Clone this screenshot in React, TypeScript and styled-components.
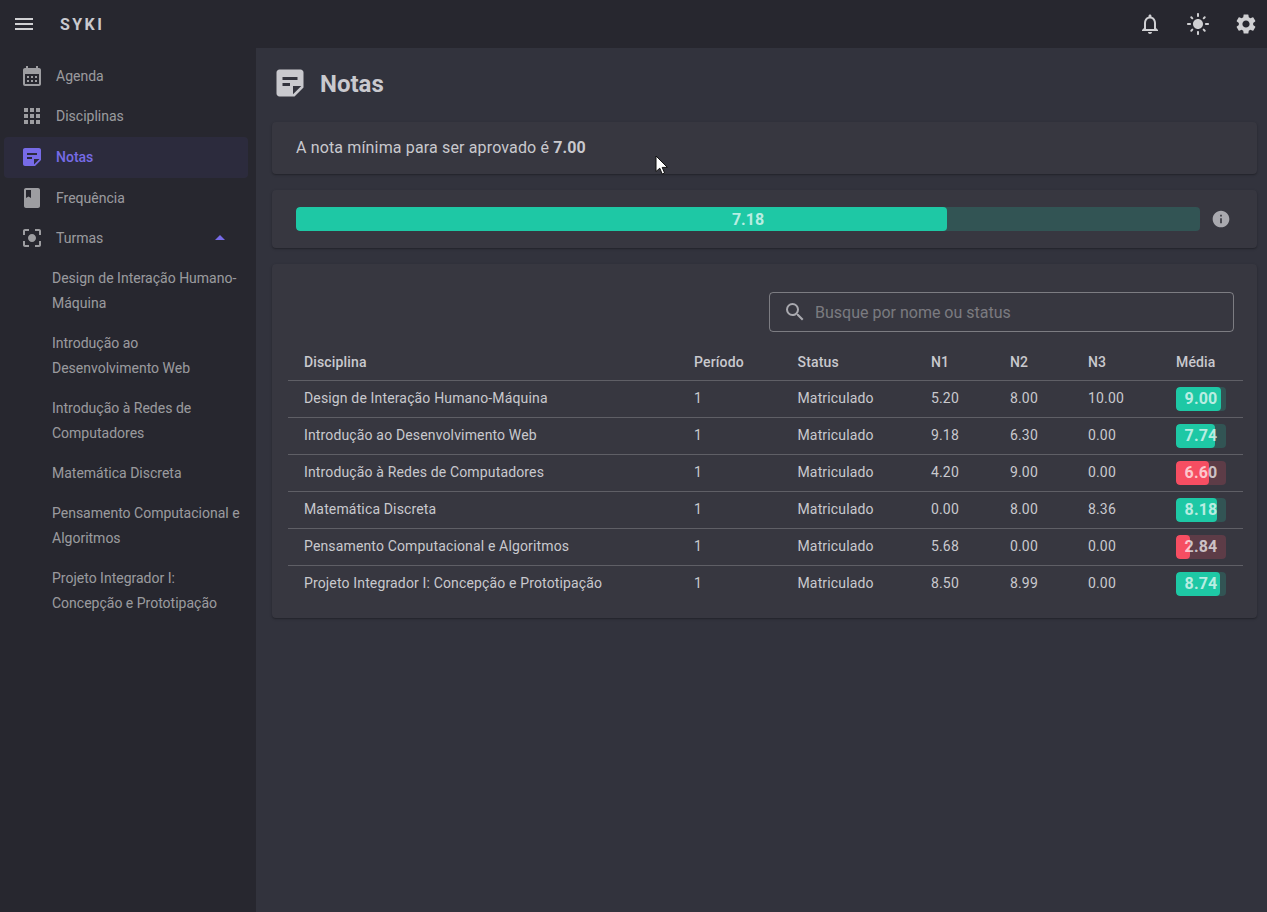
import * as React from "react";
import styled, { createGlobalStyle } from "styled-components";
import {
  MdApps,
  MdArrowDropUp,
  MdCalendarMonth,
  MdCenterFocusStrong,
  MdClass,
  MdInfo,
  MdLightMode,
  MdMenu,
  MdNotificationsNone,
  MdSearch,
  MdSettings,
  MdStickyNote2
} from "react-icons/md";

const colors = {
  bar: "#27272f",
  page: "#32333d",
  surface: "#373740",
  primary: "#776be7",
  success: "#1ec8a5",
  error: "#f64e62",
  text: "rgba(255,255,255,0.7)",
  textStrong: "#c9c9ce",
  line: "rgba(255,255,255,0.2)"
};

const GlobalStyle = createGlobalStyle`
  html, body {
    margin: 0;
    padding: 0;
    height: 100%;
    background: ${colors.page};
    font-family: Roboto, "Liberation Sans", sans-serif;
    color: ${colors.text};
    overflow: hidden;
  }
  * { box-sizing: border-box; }
`;

const Shell = styled.div`
  width: 1267px;
  height: 912px;
  display: flex;
  flex-direction: column;
  position: relative;
  overflow: hidden;
`;

const AppBar = styled.header`
  height: 48px;
  flex: none;
  display: flex;
  align-items: center;
  background: ${colors.bar};
  padding: 0 9px 0 12px;
  color: #d0d0d3;
`;

const Brand = styled.div`
  margin-left: 24px;
  font-size: 16px;
  font-weight: 700;
  letter-spacing: 2.4px;
  color: #c9c9ce;
  flex: 1;
`;

const BarIcons = styled.div`
  display: flex;
  gap: 24px;
  align-items: center;
`;

const Body = styled.div`
  flex: 1;
  display: flex;
  min-height: 0;
`;

const Drawer = styled.nav`
  width: 256px;
  flex: none;
  background: ${colors.bar};
  padding: 7.3px 8px 0 4px;
`;

const NavRow = styled.div<{ $active?: boolean }>`
  height: 41px;
  margin-bottom: -0.4px;
  display: flex;
  align-items: center;
  padding-left: 16px;
  gap: 12px;
  border-radius: 4px;
  font-size: 14px;
  color: ${p => (p.$active ? colors.primary : "rgba(255,255,255,0.55)")};
  font-weight: ${p => (p.$active ? 500 : 400)};
  background: ${p => (p.$active ? "rgba(119,107,231,0.08)" : "transparent")};
  svg { flex: none; }
`;

const NavCaret = styled.span`
  margin-left: auto;
  margin-right: 16px;
  display: flex;
  color: ${colors.primary};
`;

const SubList = styled.div`
  padding: 0 0 0 48px;
`;

const SubItem = styled.div`
  font-size: 14px;
  line-height: 24.5px;
  padding: 8px 0;
  margin-bottom: -0.1px;
  color: rgba(255, 255, 255, 0.55);
`;

const Main = styled.main`
  flex: 1;
  padding: 16px 10px 0 16px;
  display: flex;
  flex-direction: column;
`;

const TitleRow = styled.div`
  height: 38px;
  display: flex;
  align-items: center;
  gap: 12px;
  margin-bottom: 20px;
  color: #c9c9ce;
`;

const Title = styled.h1`
  margin: 0;
  padding-top: 2px;
  font-size: 24px;
  font-weight: 700;
  color: ${colors.textStrong};
`;

const Card = styled.section`
  background: ${colors.surface};
  border-radius: 4px;
  box-shadow: 0 1px 3px rgba(0, 0, 0, 0.2), 0 1px 1px rgba(0, 0, 0, 0.14);
  margin-bottom: 16px;
`;

const NoticeCard = styled(Card)`
  height: 52px;
  padding: 0 24px 2px;
  display: flex;
  align-items: center;
  font-size: 16px;
  letter-spacing: 0.15px;
  color: ${colors.textStrong};
  b { font-weight: 700; margin-left: 4px; }
`;

const ProgressCard = styled(Card)`
  height: 58px;
  padding: 0 26px 0 24px;
  display: flex;
  align-items: center;
  gap: 11px;
  color: #a9a9af;
`;

const Track = styled.div<{ $tone: string; $w?: number }>`
  position: relative;
  flex: ${p => (p.$w ? "none" : "1")};
  width: ${p => (p.$w ? `${p.$w}px` : "auto")};
  height: 24px;
  border-radius: 4px;
  overflow: hidden;
  background: ${p => p.$tone}33;
`;

const Fill = styled.div<{ $tone: string }>`
  height: 100%;
  border-radius: 4px;
  background: ${p => p.$tone};
`;

const TrackLabel = styled.span`
  position: absolute;
  inset: 0;
  display: flex;
  align-items: center;
  justify-content: center;
  font-size: 16px;
  font-weight: 700;
  color: rgba(255, 255, 255, 0.7);
`;

const TableCard = styled(Card)`
  height: 354px;
  padding: 28px 14px 0 16px;
`;

const SearchBox = styled.div`
  width: 465px;
  height: 40px;
  margin-left: auto;
  margin-right: 9px;
  border: 1px solid rgba(255, 255, 255, 0.35);
  border-radius: 4px;
  display: flex;
  align-items: center;
  padding-left: 13px;
  gap: 8px;
  font-size: 16px;
  color: rgba(255, 255, 255, 0.35);
  svg { color: #a9a9af; flex: none; }
`;

const Table = styled.table`
  width: 955px;
  margin-top: 12px;
  border-collapse: collapse;
  table-layout: fixed;
  font-size: 14px;
  letter-spacing: 0.15px;
`;

const Th = styled.th<{ $w: number }>`
  width: ${p => p.$w}px;
  height: 36px;
  padding: 0 0 0 16px;
  text-align: left;
  font-weight: 500;
  color: ${colors.textStrong};
  border-bottom: 1px solid ${colors.line};
`;

const Td = styled.td<{ $last?: boolean; $bar?: boolean }>`
  height: 37px;
  padding: 0 0 ${p => (p.$bar ? 0 : 2)}px 16px;
  color: ${colors.textStrong};
  border-bottom: ${p => (p.$last ? "none" : `1px solid ${colors.line}`)};
`;

const Cursor = styled.svg`
  position: absolute;
  left: 655px;
  top: 155px;
`;

const columns: [string, number][] = [
  ["Disciplina", 390],
  ["Período", 103.5],
  ["Status", 133.5],
  ["N1", 79],
  ["N2", 78],
  ["N3", 88],
  ["Média", 83]
];

const rows: [string, string, string, string, number][] = [
  ["Design de Interação Humano-Máquina", "5.20", "8.00", "10.00", 9.0],
  ["Introdução ao Desenvolvimento Web", "9.18", "6.30", "0.00", 7.74],
  ["Introdução à Redes de Computadores", "4.20", "9.00", "0.00", 6.6],
  ["Matemática Discreta", "0.00", "8.00", "8.36", 8.18],
  ["Pensamento Computacional e Algoritmos", "5.68", "0.00", "0.00", 2.84],
  ["Projeto Integrador I: Concepção e Prototipação", "8.50", "8.99", "0.00", 8.74]
];

const turmas = [
  ["Design de Interação Humano-", "Máquina"],
  ["Introdução ao", "Desenvolvimento Web"],
  ["Introdução à Redes de", "Computadores"],
  ["Matemática Discreta"],
  ["Pensamento Computacional e", "Algoritmos"],
  ["Projeto Integrador I:", "Concepção e Prototipação"]
];

const App = () => (
  <Shell>
    <GlobalStyle />
    <AppBar>
      <MdMenu size={24} />
      <Brand>SYKI</Brand>
      <BarIcons>
        <MdNotificationsNone size={24} />
        <MdLightMode size={24} />
        <MdSettings size={24} />
      </BarIcons>
    </AppBar>
    <Body>
      <Drawer>
        <NavRow><MdCalendarMonth size={24} />Agenda</NavRow>
        <NavRow><MdApps size={24} />Disciplinas</NavRow>
        <NavRow $active><MdStickyNote2 size={24} />Notas</NavRow>
        <NavRow><MdClass size={24} />Frequência</NavRow>
        <NavRow>
          <MdCenterFocusStrong size={24} />
          <span>Turmas</span>
          <NavCaret><MdArrowDropUp size={24} /></NavCaret>
        </NavRow>
        <SubList>
          {turmas.map(lines => (
            <SubItem key={lines[0]}>
              {lines.map(line => <div key={line}>{line}</div>)}
            </SubItem>
          ))}
        </SubList>
      </Drawer>
      <Main>
        <TitleRow>
          <MdStickyNote2 size={36} />
          <Title>Notas</Title>
        </TitleRow>
        <NoticeCard>A nota mínima para ser aprovado é <b>7.00</b></NoticeCard>
        <ProgressCard>
          <Track $tone={colors.success}>
            <Fill $tone={colors.success} style={{ width: "72%" }} />
            <TrackLabel>7.18</TrackLabel>
          </Track>
          <MdInfo size={20} />
        </ProgressCard>
        <TableCard>
          <SearchBox><MdSearch size={24} />Busque por nome ou status</SearchBox>
          <Table>
            <thead>
              <tr>
                {columns.map(([name, width]) => <Th key={name} $w={width}>{name}</Th>)}
              </tr>
            </thead>
            <tbody>
              {rows.map(([name, n1, n2, n3, avg], i) => {
                const last = i === rows.length - 1;
                const tone = avg >= 7 ? colors.success : colors.error;
                return (
                  <tr key={name}>
                    <Td $last={last}>{name}</Td>
                    <Td $last={last}>1</Td>
                    <Td $last={last}>Matriculado</Td>
                    <Td $last={last}>{n1}</Td>
                    <Td $last={last}>{n2}</Td>
                    <Td $last={last}>{n3}</Td>
                    <Td $last={last} $bar>
                      <Track $tone={tone} $w={50}>
                        <Fill $tone={tone} style={{ width: `${avg * 10}%` }} />
                        <TrackLabel>{avg.toFixed(2)}</TrackLabel>
                      </Track>
                    </Td>
                  </tr>
                );
              })}
            </tbody>
          </Table>
        </TableCard>
      </Main>
    </Body>
    <Cursor width="14" height="21" viewBox="0 0 14 21">
      <path d="M1 1 L1 16.5 L4.8 13.2 L7.2 19 L9.6 18 L7.2 12.4 L12.4 12.4 Z" fill="#fff" stroke="#111" strokeWidth="1" />
    </Cursor>
  </Shell>
);

export default App;
